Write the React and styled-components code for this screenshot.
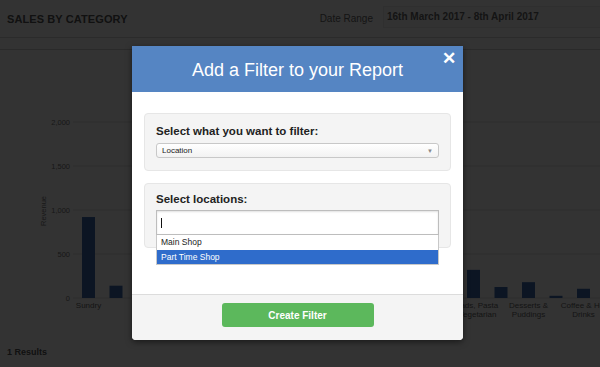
import React from 'react'
import styled, { createGlobalStyle } from 'styled-components'

const GlobalStyle = createGlobalStyle`
  html, body {
    margin: 0;
    padding: 0;
    background: #ffffff;
    font-family: "Liberation Sans", Arial, sans-serif;
  }
  #root {
    width: 600px;
    height: 367px;
    position: relative;
    overflow: hidden;
  }
`

const Page = styled.div`
  width: 600px;
  height: 367px;
  display: flex;
  flex-direction: column;
  color: #555;
`
const TopBar = styled.div`
  height: 37px;
  display: flex;
  align-items: center;
  justify-content: space-between;
  padding-left: 7px;
  border-bottom: 1px solid #d8d8d8;
`
const PageTitle = styled.h1`
  margin: 0;
  font-size: 11px;
  font-weight: bold;
  color: #555;
  letter-spacing: 0.1px;
`
const DateGroup = styled.div`
  display: flex;
  align-items: center;
  gap: 10px;
  height: 100%;
`
const DateLabel = styled.span`
  font-size: 10px;
  color: #666;
`
const DateInput = styled.div`
  width: 217px;
  height: 22px;
  box-sizing: border-box;
  border: 1px solid #e8e8e8;
  border-right: none;
  background: #fbfbfb;
  display: flex;
  align-items: center;
  padding-left: 3px;
  font-size: 10px;
  font-weight: bold;
  color: #666;
  margin-bottom: 4px;
`
const SubBar = styled.div`
  height: 11px;
  border-bottom: 1px solid #d0d0d0;
`
const ChartBox = styled.div`
  height: 297px;
`
const Results = styled.div`
  padding-left: 7px;
  font-size: 9px;
  font-weight: bold;
  color: #555;
`

const Overlay = styled.div`
  position: absolute;
  inset: 0;
  background: rgba(0, 0, 0, 0.8);
  display: flex;
  justify-content: flex-start;
  align-items: flex-start;
  padding: 46px 0 0 132px;
`
const Modal = styled.div`
  width: 331px;
  background: #fff;
  border-radius: 0 0 4px 4px;
  box-shadow: 0 2px 6px rgba(0, 0, 0, 0.5);
`
const ModalHeader = styled.div`
  position: relative;
  height: 46px;
  background: #5585c3;
  display: flex;
  align-items: center;
  justify-content: center;
`
const ModalTitle = styled.h2`
  margin: 2px 0 0;
  font-size: 18px;
  font-weight: normal;
  color: #fff;
`
const Close = styled.span`
  position: absolute;
  right: 7px;
  top: 2px;
  color: #fff;
  font-size: 17px;
  font-weight: bold;
`
const ModalBody = styled.div`
  height: 202px;
  box-sizing: border-box;
  padding: 21px 12px 0;
  display: flex;
  flex-direction: column;
  gap: 12px;
`
const Panel = styled.div`
  height: ${p => p.$h}px;
  box-sizing: border-box;
  background: #f4f4f4;
  border: 1px solid #e6e6e6;
  border-radius: 4px;
  padding: ${p => p.$top}px 11px 0;
`
const Label = styled.div`
  font-size: 11.5px;
  font-weight: bold;
  color: #222;
  margin-bottom: ${p => p.$gap}px;
`
const Select = styled.div`
  height: 15px;
  box-sizing: border-box;
  border: 1px solid #c8c8c8;
  border-radius: 3px;
  background: linear-gradient(#ffffff, #f2f2f2);
  display: flex;
  align-items: center;
  justify-content: space-between;
  padding: 0 5px;
  font-size: 8px;
  color: #222;
`
const Arrow = styled.span`
  font-size: 6px;
  color: #888;
`
const ComboWrap = styled.div`
  position: relative;
`
const TextInput = styled.div`
  height: 25px;
  box-sizing: border-box;
  border: 1px solid #bdbdbd;
  background: #fff;
  box-shadow: inset 0 1px 2px rgba(0, 0, 0, 0.12);
  display: flex;
  align-items: center;
  padding-left: 4px;
`
const Caret = styled.span`
  width: 1px;
  height: 10px;
  background: #111;
`
const Options = styled.ul`
  position: absolute;
  left: 0;
  right: 0;
  top: 25px;
  margin: 0;
  padding: 0;
  list-style: none;
  background: #fff;
  border: 1px solid #c8c8c8;
  border-top: none;
  z-index: 2;
`
const Option = styled.li`
  height: 14.5px;
  display: flex;
  align-items: center;
  padding-left: 4px;
  font-size: 8.5px;
  color: ${p => (p.$active ? '#fff' : '#222')};
  background: ${p => (p.$active ? '#2f6ccb' : '#fff')};
`
const ModalFooter = styled.div`
  height: 46px;
  box-sizing: border-box;
  background: #f4f4f4;
  border-top: 1px solid #dcdcdc;
  border-radius: 0 0 4px 4px;
  display: flex;
  justify-content: center;
  padding-top: 8px;
`
const Button = styled.button`
  width: 152px;
  height: 24px;
  border: none;
  border-radius: 3px;
  background: #5cb85c;
  color: #fff;
  font-family: inherit;
  font-size: 10px;
  font-weight: bold;
`

// only every second category gets a label, the chart skips the rest
const categories = [
  { name: ['Sundry'], value: 920 },
  { name: [], value: 140 },
  { name: ['Deli'], value: 600 },
  { name: [], value: 400 },
  { name: ['Cakes'], value: 350 },
  { name: [], value: 300 },
  { name: ['Snacks'], value: 250 },
  { name: [], value: 220 },
  { name: ['Juices'], value: 200 },
  { name: [], value: 180 },
  { name: ['Tea'], value: 160 },
  { name: [], value: 150 },
  { name: ['Bakery'], value: 140 },
  { name: [], value: 120 },
  { name: ['Salads, Pasta', '& Vegetarian'], value: 320 },
  { name: [], value: 125 },
  { name: ['Desserts &', 'Puddings'], value: 180 },
  { name: [], value: 25 },
  { name: ['Coffee & Hot', 'Drinks'], value: 105 },
]

const Chart = () => {
  const base = 248
  const scale = 44 / 500
  const ticks = [0, 500, 1000, 1500, 2000]
  return (
    <svg width="600" height="297" style={{ display: 'block' }}>
      {ticks.map(t => {
        const y = base - t * scale
        return (
          <g key={t}>
            <line x1="73" x2="600" y1={y} y2={y} stroke="#e2e2e2" strokeWidth="1" />
            <text x="70" y={y + 3} textAnchor="end" fontSize="7.5" fill="#777" fontFamily="Liberation Sans">
              {t.toLocaleString('en-US')}
            </text>
          </g>
        )
      })}
      <text x="46" y="161" fontSize="7.5" fill="#777" textAnchor="middle" fontFamily="Liberation Sans" transform="rotate(-90 46 161)">
        Revenue
      </text>
      {categories.map((c, i) => {
        const x = 82 + i * 27.5
        const h = c.value * scale
        return (
          <g key={i}>
            <rect x={x} y={base - h} width="13" height={h} fill="#3d6bb0" />
            {c.name.map((line, j) => (
              <text key={j} x={x + 6.5} y={base + 10 + j * 8.5} textAnchor="middle" fontSize="8" fill="#666" fontFamily="Liberation Sans">
                {line}
              </text>
            ))}
          </g>
        )
      })}
    </svg>
  )
}

export default function App() {
  return (
    <>
      <GlobalStyle />
      <Page>
        <TopBar>
          <PageTitle>SALES BY CATEGORY</PageTitle>
          <DateGroup>
            <DateLabel>Date Range</DateLabel>
            <DateInput>16th March 2017 - 8th April 2017</DateInput>
          </DateGroup>
        </TopBar>
        <SubBar />
        <ChartBox>
          <Chart />
        </ChartBox>
        <Results>1 Results</Results>
      </Page>
      <Overlay>
        <Modal>
          <ModalHeader>
            <ModalTitle>Add a Filter to your Report</ModalTitle>
            <Close>✕</Close>
          </ModalHeader>
          <ModalBody>
            <Panel $h={58} $top={11}>
              <Label $gap={6}>Select what you want to filter:</Label>
              <Select>
                Location
                <Arrow>▼</Arrow>
              </Select>
            </Panel>
            <Panel $h={65} $top={9}>
              <Label $gap={5}>Select locations:</Label>
              <ComboWrap>
                <TextInput>
                  <Caret />
                </TextInput>
                <Options>
                  <Option>Main Shop</Option>
                  <Option $active>Part Time Shop</Option>
                </Options>
              </ComboWrap>
            </Panel>
          </ModalBody>
          <ModalFooter>
            <Button>Create Filter</Button>
          </ModalFooter>
        </Modal>
      </Overlay>
    </>
  )
}
